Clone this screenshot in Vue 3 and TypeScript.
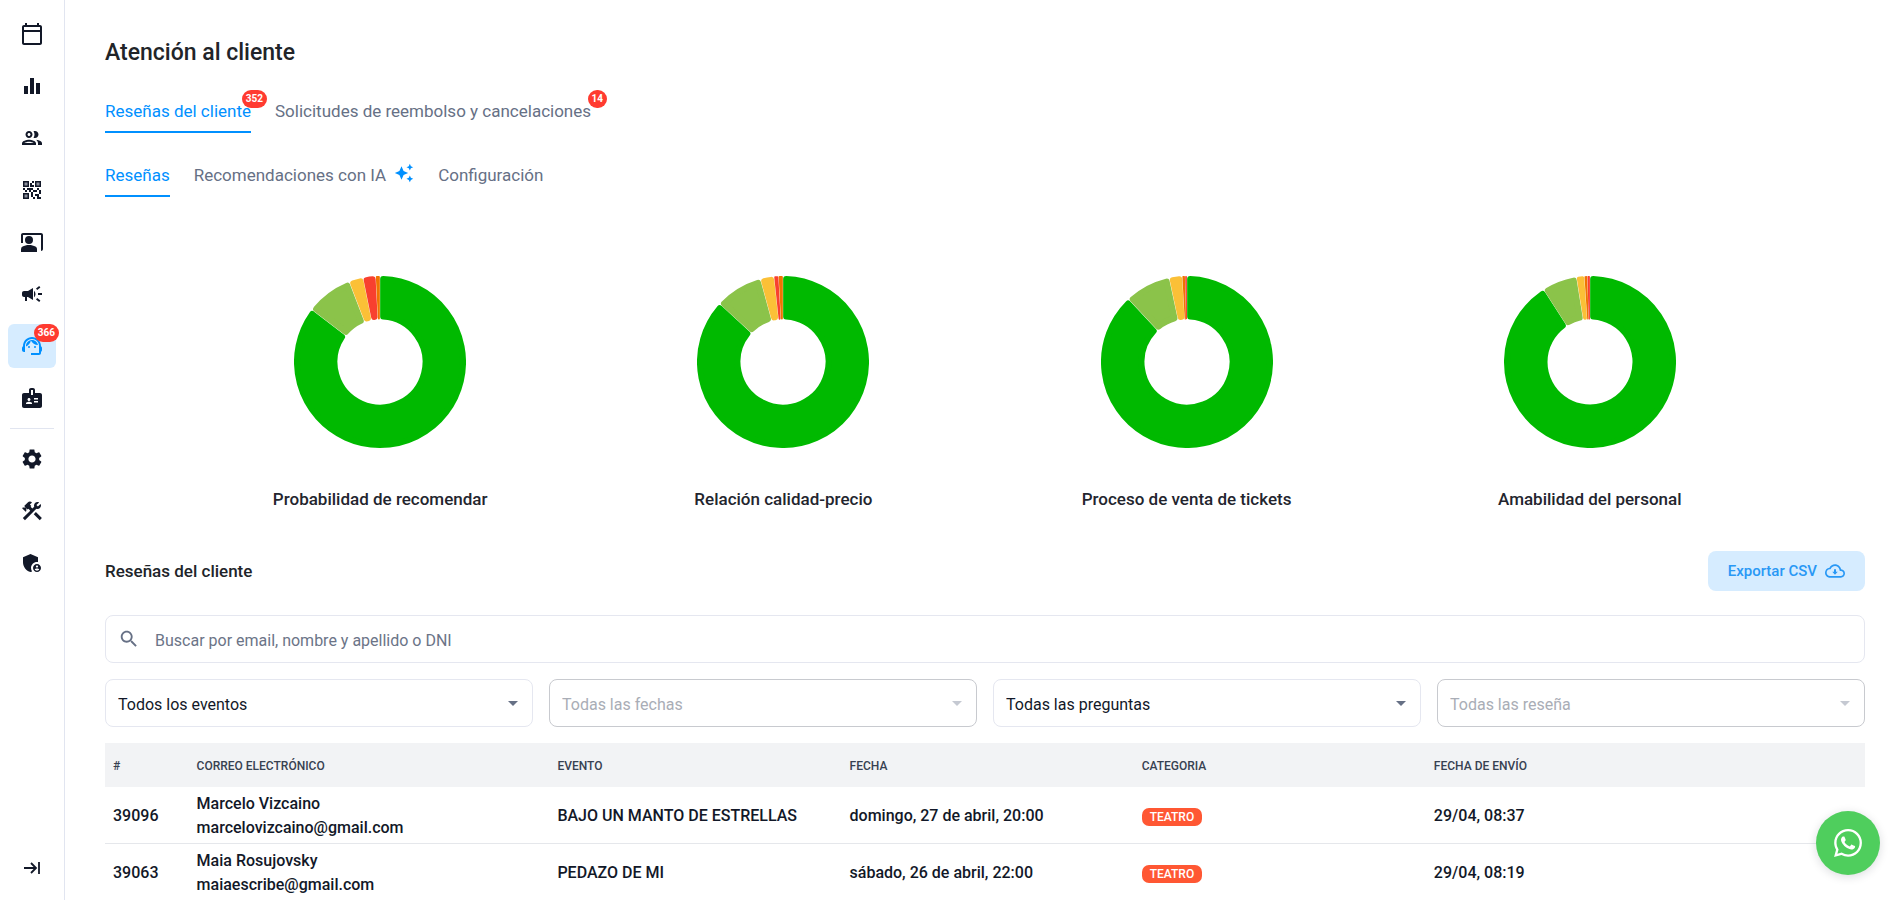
<script setup lang="ts">
import { ref } from 'vue'

interface Shape {
  d: string
  fill?: string
}
interface NavItem {
  label: string
  shapes: Shape[]
  active?: boolean
  badge?: number
}
interface Slice {
  color: string
  degrees: number
}
interface Chart {
  title: string
  slices: Slice[]
}

const DARK_GREEN = '#00b900'
const LIGHT_GREEN = '#8bc34a'
const YELLOW = '#fbc037'
const ORANGE = '#ef7400'
const RED = '#f8402f'

const mainNav: NavItem[] = [
  {
    label: 'Eventos',
    shapes: [{ d: 'M20 3h-1V1h-2v2H7V1H5v2H4c-1.1 0-2 .9-2 2v16c0 1.1.9 2 2 2h16c1.1 0 2-.9 2-2V5c0-1.1-.9-2-2-2zm0 18H4V10h16v11zm0-13H4V5h16v3z' }],
  },
  { label: 'Reportes', shapes: [{ d: 'M10 20h4V4h-4v16zm-6 0h4v-8H4v8zM16 9v11h4V9h-4z' }] },
  {
    label: 'Clientes',
    shapes: [{ d: 'M9 13.75c-2.34 0-7 1.17-7 3.5V19h14v-1.75c0-2.33-4.66-3.5-7-3.5zM4.34 17c.84-.58 2.87-1.25 4.66-1.25s3.82.67 4.66 1.25H4.34zM9 12c1.93 0 3.5-1.57 3.5-3.5S10.93 5 9 5 5.5 6.57 5.5 8.5 7.07 12 9 12zm0-5c.83 0 1.5.67 1.5 1.5S9.83 10 9 10s-1.5-.67-1.5-1.5S8.17 7 9 7zm7.04 6.81c1.16.84 1.96 1.96 1.96 3.44V19h4v-1.75c0-2.02-3.5-3.17-5.96-3.44zM15 12c1.93 0 3.5-1.57 3.5-3.5S16.93 5 15 5c-.54 0-1.04.13-1.5.35.63.89 1 1.98 1 3.15s-.37 2.26-1 3.15c.46.22.96.35 1.5.35z' }],
  },
  {
    label: 'Accesos QR',
    shapes: [
      { d: 'M4 4h4v4H4zM16 4h4v4h-4zM4 16h4v4H4z', fill: '#8b8f9b' },
      { d: 'M15 21h-2v-2h2v2zm-2-7h-2v5h2v-5zm8-2h-2v4h2v-4zm-2-2h-2v2h2v-2zM7 12H5v2h2v-2zm-2-2H3v2h2v-2zm7-5h2V3h-2v2zm-7.5-.5v3h3v-3h-3zM9 9H3V3h6v6zm-4.5 7.5v3h3v-3h-3zM9 21H3v-6h6v6zm7.5-16.5v3h3v-3h-3zM21 9h-6V3h6v6zm-2 10v-3h-4v2h2v3h4v-2h-2zm-2-7h-4v2h4v-2zm-4-2H7v2h2v2h2v-2h2v-2zm1-1V7h-2V5h-2v4h4z' },
    ],
  },
  {
    label: 'Presentadores',
    shapes: [
      { d: 'M21 3H3c-1.1 0-2 .9-2 2v8h2V5h18v16c1.1 0 2-.9 2-2V5c0-1.1-.9-2-2-2z' },
      { d: 'M9 6a4 4 0 1 0 0 8 4 4 0 0 0 0-8zM15.39 16.56C13.71 15.7 11.53 15 9 15s-4.71.7-6.39 1.56A2.97 2.97 0 0 0 1 19.22V22h16v-2.78c0-1.12-.61-2.15-1.61-2.66z' },
    ],
  },
  {
    label: 'Marketing',
    shapes: [{ d: 'M18 11v2h4v-2h-4zm-2 6.61c.96.71 2.21 1.65 3.2 2.39.4-.53.8-1.07 1.2-1.6-.99-.74-2.24-1.68-3.2-2.4-.4.54-.8 1.08-1.2 1.61zM20.4 5.6c-.4-.53-.8-1.07-1.2-1.6-.99.74-2.24 1.68-3.2 2.4.4.53.8 1.07 1.2 1.6.96-.72 2.21-1.65 3.2-2.4zM4 9c-1.1 0-2 .9-2 2v2c0 1.1.9 2 2 2h1v4h2v-4h1l5 3V6L8 9H4zm11.5 3c0-1.33-.58-2.53-1.5-3.35v6.69c.92-.81 1.5-2.01 1.5-3.34z' }],
  },
  {
    label: 'Atención al cliente',
    active: true,
    badge: 366,
    shapes: [
      { d: 'M21 12.22C21 6.73 16.74 3 12 3c-4.69 0-9 3.65-9 9.28-.6.34-1 .98-1 1.72v2c0 1.1.9 2 2 2h1v-6.1c0-3.87 3.13-7 7-7s7 3.13 7 7V19h-8v2h8c1.1 0 2-.9 2-2v-1.22c.59-.31 1-.92 1-1.64v-2.3c0-.7-.41-1.31-1-1.62z' },
      { d: 'M9 12a1 1 0 1 0 0 2 1 1 0 0 0 0-2zM15 12a1 1 0 1 0 0 2 1 1 0 0 0 0-2z' },
      { d: 'M18 11.03C17.52 8.18 15.04 6 12.05 6c-3.03 0-6.29 2.51-6.03 6.45 2.47-1.01 4.33-3.21 4.86-5.89 1.31 2.63 4 4.44 7.12 4.47z' },
    ],
  },
  {
    label: 'Personal',
    shapes: [{ d: 'M20 7h-5V4c0-1.1-.9-2-2-2h-2c-1.1 0-2 .9-2 2v3H4c-1.1 0-2 .9-2 2v11c0 1.1.9 2 2 2h16c1.1 0 2-.9 2-2V9c0-1.1-.9-2-2-2zM9 12c.83 0 1.5.67 1.5 1.5S9.83 15 9 15s-1.5-.67-1.5-1.5S8.17 12 9 12zm3 6H6v-.75c0-1 2-1.5 3-1.5s3 .5 3 1.5V18zm1-9h-2V4h2v5zm5 7.5h-4V15h4v1.5zm0-3h-4V12h4v1.5z' }],
  },
]

const adminNav: NavItem[] = [
  {
    label: 'Ajustes',
    shapes: [{ d: 'M19.14 12.94c.04-.3.06-.61.06-.94 0-.32-.02-.64-.07-.94l2.03-1.58c.18-.14.23-.41.12-.61l-1.92-3.32c-.12-.22-.37-.29-.59-.22l-2.39.96c-.5-.38-1.03-.7-1.62-.94l-.36-2.54c-.04-.24-.24-.41-.48-.41h-3.84c-.24 0-.43.17-.47.41l-.36 2.54c-.59.24-1.13.57-1.62.94l-2.39-.96c-.22-.08-.47 0-.59.22L2.74 8.87c-.12.21-.08.47.12.61l2.03 1.58c-.05.3-.09.63-.09.94s.02.64.07.94l-2.03 1.58c-.18.14-.23.41-.12.61l1.92 3.32c.12.22.37.29.59.22l2.39-.96c.5.38 1.03.7 1.62.94l.36 2.54c.05.24.24.41.48.41h3.84c.24 0 .44-.17.47-.41l.36-2.54c.59-.24 1.13-.56 1.62-.94l2.39.96c.22.08.47 0 .59-.22l1.92-3.32c.12-.22.07-.47-.12-.61l-2.01-1.58zM12 15.6c-1.98 0-3.6-1.62-3.6-3.6s1.62-3.6 3.6-3.6 3.6 1.62 3.6 3.6-1.62 3.6-3.6 3.6z' }],
  },
  {
    label: 'Herramientas',
    shapes: [
      { d: 'm13.78 15.17 2.12-2.12 6 6-2.12 2.12z' },
      { d: 'M17.5 10c1.93 0 3.5-1.57 3.5-3.5 0-.58-.16-1.12-.41-1.6l-2.7 2.7-1.49-1.49 2.7-2.7c-.48-.25-1.02-.41-1.6-.41C15.57 3 14 4.57 14 6.5c0 .41.08.8.21 1.16l-1.85 1.85-1.78-1.78.71-.71-1.41-1.41L12 3.49c-1.17-1.17-3.07-1.17-4.24 0L4.22 7.03l1.41 1.41H2.81l-.71.71 3.54 3.54.71-.71V9.15l1.41 1.41.71-.71 1.78 1.78-7.41 7.41 2.12 2.12L16.34 9.79c.36.13.75.21 1.16.21z' },
    ],
  },
  {
    label: 'Administración',
    shapes: [
      { d: 'M17 11c.34 0 .67.04 1 .09V6.27L10.5 3 3 6.27v4.91c0 4.54 3.2 8.79 7.5 9.82.55-.13 1.08-.32 1.6-.55-.69-.98-1.1-2.17-1.1-3.45 0-3.31 2.69-6 6-6z' },
      { d: 'M17 13c-2.21 0-4 1.79-4 4s1.79 4 4 4 4-1.79 4-4-1.79-4-4-4zm0 1.38c.62 0 1.12.51 1.12 1.12s-.51 1.12-1.12 1.12-1.12-.51-1.12-1.12.5-1.12 1.12-1.12zm0 5.37c-.93 0-1.74-.46-2.24-1.17.05-.72 1.51-1.08 2.24-1.08s2.19.36 2.24 1.08c-.5.71-1.31 1.17-2.24 1.17z' },
    ],
  },
]

const charts: Chart[] = [
  {
    title: 'Probabilidad de recomendar',
    slices: [
      { color: DARK_GREEN, degrees: 307.5 },
      { color: LIGHT_GREEN, degrees: 31.5 },
      { color: YELLOW, degrees: 9.6 },
      { color: RED, degrees: 8.5 },
      { color: ORANGE, degrees: 2.9 },
    ],
  },
  {
    title: 'Relación calidad-precio',
    slices: [
      { color: DARK_GREEN, degrees: 312.5 },
      { color: LIGHT_GREEN, degrees: 32.2 },
      { color: YELLOW, degrees: 9.3 },
      { color: RED, degrees: 3 },
      { color: ORANGE, degrees: 3 },
    ],
  },
  {
    title: 'Proceso de venta de tickets',
    slices: [
      { color: DARK_GREEN, degrees: 317 },
      { color: LIGHT_GREEN, degrees: 31 },
      { color: YELLOW, degrees: 8.8 },
      { color: ORANGE, degrees: 1.9 },
      { color: RED, degrees: 1.3 },
    ],
  },
  {
    title: 'Amabilidad del personal',
    slices: [
      { color: DARK_GREEN, degrees: 327.3 },
      { color: LIGHT_GREEN, degrees: 23.6 },
      { color: YELLOW, degrees: 5.3 },
      { color: ORANGE, degrees: 2 },
      { color: RED, degrees: 1.8 },
    ],
  },
]

const OUTER = 85
const INNER = 42

/* Ring segments, inset by the corner radius and stroked back out with round joins. */
function arcs(slices: Slice[]) {
  const rad = Math.PI / 180
  let start = 0
  return slices.map(({ color, degrees }) => {
    const from = start * rad
    const to = (start + degrees) * rad
    start += degrees
    const half = Math.min((to - from) / 2, Math.PI / 2)
    const corner = Math.min(3, INNER * Math.sin(half) * 0.9)
    const inset = corner + 0.15
    const ro = OUTER - corner
    const ri = INNER + corner
    const ao = Math.min(Math.asin(inset / ro), half)
    const ai = Math.min(Math.asin(inset / ri), half)
    const at = (r: number, a: number) => `${(r * Math.sin(a)).toFixed(2)} ${(-r * Math.cos(a)).toFixed(2)}`
    const large = degrees > 180 ? 1 : 0
    const d =
      `M${at(ro, from + ao)}A${ro} ${ro} 0 ${large} 1 ${at(ro, to - ao)}` +
      `L${at(ri, to - ai)}A${ri} ${ri} 0 ${large} 0 ${at(ri, from + ai)}Z`
    return { color, d, width: corner * 2 }
  })
}

const filters = [
  { id: 'evento', label: 'Evento', value: 'Todos los eventos', disabled: false },
  { id: 'fecha', label: 'Fecha', value: 'Todas las fechas', disabled: true },
  { id: 'pregunta', label: 'Pregunta', value: 'Todas las preguntas', disabled: false },
  { id: 'resena', label: 'Reseña', value: 'Todas las reseña', disabled: true },
]

const reviews = [
  { id: 39096, name: 'Marcelo Vizcaino', email: 'marcelovizcaino@gmail.com', event: 'BAJO UN MANTO DE ESTRELLAS', date: 'domingo, 27 de abril, 20:00', category: 'TEATRO', sent: '29/04, 08:37' },
  { id: 39063, name: 'Maia Rosujovsky', email: 'maiaescribe@gmail.com', event: 'PEDAZO DE MI', date: 'sábado, 26 de abril, 22:00', category: 'TEATRO', sent: '29/04, 08:19' },
]

const query = ref('')
</script>

<template>
  <div class="shell">
    <nav class="sidebar" aria-label="Principal">
      <a
        v-for="item in mainNav"
        :key="item.label"
        href="#"
        class="nav-item"
        :class="{ active: item.active }"
        :aria-label="item.label"
      >
        <svg class="icon" viewBox="0 0 24 24" aria-hidden="true">
          <path v-for="(s, i) in item.shapes" :key="i" :d="s.d" :fill="s.fill ?? 'currentColor'" />
        </svg>
        <span v-if="item.badge" class="badge nav-badge">{{ item.badge }}</span>
      </a>
      <hr class="nav-rule" />
      <a v-for="item in adminNav" :key="item.label" href="#" class="nav-item" :aria-label="item.label">
        <svg class="icon" viewBox="0 0 24 24" aria-hidden="true">
          <path v-for="(s, i) in item.shapes" :key="i" :d="s.d" fill="currentColor" />
        </svg>
      </a>
      <button type="button" class="nav-item expand" aria-label="Expandir menú">
        <svg class="icon" viewBox="0 0 24 24" aria-hidden="true">
          <path d="M4 12h12M11 7l5 5-5 5M19 6v12" fill="none" stroke="currentColor" stroke-width="1.8" />
        </svg>
      </button>
    </nav>

    <main class="content">
      <h1 class="title">Atención al cliente</h1>

      <nav class="tabs" aria-label="Secciones">
        <a href="#" class="tab active">Reseñas del cliente<span class="badge tab-badge">352</span></a>
        <a href="#" class="tab">Solicitudes de reembolso y cancelaciones<span class="badge tab-badge">14</span></a>
      </nav>

      <nav class="tabs secondary" aria-label="Reseñas">
        <a href="#" class="tab active">Reseñas</a>
        <a href="#" class="tab with-icon">
          Recomendaciones con IA
          <svg class="sparkle" viewBox="0 0 24 24" aria-hidden="true">
            <path fill="currentColor" d="m19 9 1.25-2.75L23 5l-2.75-1.25L19 1l-1.25 2.75L15 5l2.75 1.25L19 9zm-7.5.5L9 4 6.5 9.5 1 12l5.5 2.5L9 20l2.5-5.5L17 12l-5.5-2.5zM19 15l-1.25 2.75L15 19l2.75 1.25L19 23l1.25-2.75L23 19l-2.75-1.25L19 15z" />
          </svg>
        </a>
        <a href="#" class="tab">Configuración</a>
      </nav>

      <section class="charts" aria-label="Resultados">
        <figure v-for="chart in charts" :key="chart.title" class="chart">
          <svg class="donut" viewBox="-85 -85 170 170" role="img" :aria-label="chart.title">
            <path
              v-for="(arc, i) in arcs(chart.slices)"
              :key="i"
              :d="arc.d"
              :fill="arc.color"
              :stroke="arc.color"
              :stroke-width="arc.width"
              stroke-linejoin="round"
            />
          </svg>
          <figcaption class="caption">{{ chart.title }}</figcaption>
        </figure>
      </section>

      <header class="section-head">
        <h2 class="subtitle">Reseñas del cliente</h2>
        <button type="button" class="export">
          Exportar CSV
          <svg class="cloud" viewBox="0 0 24 24" aria-hidden="true">
            <path fill="currentColor" d="M19.35 10.04C18.67 6.59 15.64 4 12 4 9.11 4 6.6 5.64 5.35 8.04 2.34 8.36 0 10.91 0 14c0 3.31 2.69 6 6 6h13c2.76 0 5-2.24 5-5 0-2.64-2.05-4.78-4.65-4.96zM19 18H6c-2.21 0-4-1.79-4-4 0-2.05 1.53-3.76 3.56-3.97l1.07-.11.5-.95C8.08 7.14 9.94 6 12 6c2.62 0 4.88 1.86 5.39 4.43l.3 1.5 1.53.11c1.56.1 2.78 1.41 2.78 2.96 0 1.65-1.35 3-3 3zM13.2 10h-2.4v3H8.7l3.3 3.4 3.3-3.4h-2.1z" />
          </svg>
        </button>
      </header>

      <label class="search">
        <svg class="search-icon" viewBox="0 0 24 24" aria-hidden="true">
          <path fill="currentColor" d="M15.5 14h-.79l-.28-.27C15.41 12.59 16 11.11 16 9.5 16 5.91 13.09 3 9.5 3S3 5.91 3 9.5 5.91 16 9.5 16c1.61 0 3.09-.59 4.23-1.57l.27.28v.79l5 4.99L20.49 19l-4.99-5zm-6 0C7.01 14 5 11.99 5 9.5S7.01 5 9.5 5 14 7.01 14 9.5 11.99 14 9.5 14z" />
        </svg>
        <input
          v-model="query"
          type="text"
          class="search-input"
          aria-label="Buscar"
          placeholder="Buscar por email, nombre y apellido o DNI"
        />
      </label>

      <div class="filters">
        <div v-for="f in filters" :key="f.id" class="filter" :class="{ disabled: f.disabled }">
          <select :id="f.id" class="select" :aria-label="f.label" :disabled="f.disabled">
            <option>{{ f.value }}</option>
          </select>
          <svg class="caret" viewBox="0 0 24 24" aria-hidden="true">
            <path fill="currentColor" d="m7 10 5 5 5-5z" />
          </svg>
        </div>
      </div>

      <table class="table">
        <colgroup>
          <col class="col-id" />
          <col class="col-mail" />
          <col class="col-data" />
          <col class="col-data" />
          <col class="col-data" />
          <col />
        </colgroup>
        <thead>
          <tr>
            <th scope="col">#</th>
            <th scope="col">CORREO ELECTRÓNICO</th>
            <th scope="col">EVENTO</th>
            <th scope="col">FECHA</th>
            <th scope="col">CATEGORIA</th>
            <th scope="col">FECHA DE ENVÍO</th>
          </tr>
        </thead>
        <tbody>
          <tr v-for="r in reviews" :key="r.id">
            <td>{{ r.id }}</td>
            <td>{{ r.name }}<br />{{ r.email }}</td>
            <td>{{ r.event }}</td>
            <td>{{ r.date }}</td>
            <td><span class="pill">{{ r.category }}</span></td>
            <td>{{ r.sent }}</td>
          </tr>
        </tbody>
      </table>
    </main>

    <a href="#" class="whatsapp" aria-label="WhatsApp">
      <svg class="whatsapp-icon" viewBox="0 0 24 24" aria-hidden="true">
        <path fill="currentColor" d="M17.472 14.382c-.297-.149-1.758-.867-2.03-.967-.273-.099-.471-.148-.67.15-.197.297-.767.966-.94 1.164-.173.199-.347.223-.644.075-.297-.15-1.255-.463-2.39-1.475-.883-.788-1.48-1.761-1.653-2.059-.173-.297-.018-.458.13-.606.134-.133.298-.347.446-.52.149-.174.198-.298.298-.497.099-.198.05-.371-.025-.52-.075-.149-.669-1.612-.916-2.207-.242-.579-.487-.5-.669-.51-.173-.008-.371-.01-.57-.01-.198 0-.52.074-.792.372-.272.297-1.04 1.016-1.04 2.479 0 1.462 1.065 2.875 1.213 3.074.149.198 2.096 3.2 5.077 4.487.709.306 1.262.489 1.694.625.712.227 1.36.195 1.871.118.571-.085 1.758-.719 2.006-1.413.248-.694.248-1.289.173-1.413-.074-.124-.272-.198-.57-.347m-5.421 7.403h-.004a9.87 9.87 0 01-5.031-1.378l-.361-.214-3.741.982.998-3.648-.235-.374a9.86 9.86 0 01-1.51-5.26c.001-5.45 4.436-9.884 9.888-9.884 2.64 0 5.122 1.03 6.988 2.898a9.825 9.825 0 012.893 6.994c-.003 5.45-4.437 9.884-9.885 9.884m8.413-18.297A11.815 11.815 0 0012.05 0C5.495 0 .16 5.335.157 11.892c0 2.096.547 4.142 1.588 5.945L.057 24l6.305-1.654a11.882 11.882 0 005.683 1.448h.005c6.554 0 11.89-5.335 11.893-11.893a11.821 11.821 0 00-3.48-8.413z" />
      </svg>
    </a>
  </div>
</template>

<style>
body {
  margin: 0;
  background: #fff;
}
</style>

<style scoped>
.shell {
  display: flex;
  height: 100vh;
  font-family: Roboto, "Liberation Sans", sans-serif;
  font-size: 16px;
  line-height: 24px;
  color: #121828;
}

.sidebar {
  display: flex;
  flex: none;
  flex-direction: column;
  gap: 8px;
  width: 65px;
  box-sizing: border-box;
  padding: 12px 0 10px;
  border-right: 1px solid #e1e5f0;
}
.nav-item {
  position: relative;
  display: flex;
  flex: none;
  align-items: center;
  justify-content: center;
  height: 44px;
  margin: 0 8px;
  padding: 0;
  border: 0;
  border-radius: 6px;
  background: none;
  color: #121828;
  cursor: pointer;
}
.nav-item.active {
  background: #d6ecff;
  color: #0090ff;
}
.icon {
  width: 24px;
  height: 24px;
}
.nav-rule {
  flex: none;
  width: 44px;
  height: 1px;
  margin: 0 auto;
  border: 0;
  background: #e1e5f0;
}
.expand {
  margin-top: auto;
}

.badge {
  position: absolute;
  top: 0;
  min-width: 18px;
  height: 18px;
  box-sizing: border-box;
  padding: 0 4px;
  border-radius: 9px;
  background: #ff3b30;
  color: #fff;
  font-size: 10px;
  font-weight: 700;
  line-height: 18px;
  text-align: center;
}
.nav-badge {
  right: -3px;
}
.tab-badge {
  top: -9px;
  right: -16px;
}

.content {
  flex: 1;
  min-width: 0;
  overflow-y: auto;
  scrollbar-width: none;
  padding: 39px 38px 0 40px;
}
.title {
  margin: 0;
  font-size: 23px;
  font-weight: 500;
  line-height: 28px;
  color: #212429;
}
.tabs {
  display: flex;
  gap: 24px;
  margin-top: 32px;
}
.tabs.secondary {
  margin-top: 30px;
}
.tab {
  position: relative;
  padding-bottom: 8px;
  border-bottom: 2px solid transparent;
  color: #667085;
  font-size: 17px;
  text-decoration: none;
  white-space: nowrap;
}
.tab.active {
  border-color: #0090ff;
  color: #0090ff;
}
.with-icon {
  display: flex;
  gap: 8px;
}
.sparkle {
  width: 20px;
  height: 20px;
  color: #0090ff;
}

.charts {
  display: flex;
  justify-content: space-evenly;
  margin-top: 79px;
}
.chart {
  display: flex;
  flex-direction: column;
  align-items: center;
  gap: 39px;
  width: 256px;
  margin: 0;
}
.donut {
  display: block;
  width: 172px;
  height: 172px;
}
.caption {
  font-size: 17px;
  font-weight: 500;
  color: #23252e;
  white-space: nowrap;
}

.section-head {
  display: flex;
  align-items: center;
  justify-content: space-between;
  margin-top: 40px;
}
.subtitle {
  margin: 0;
  font-size: 17px;
  font-weight: 500;
  color: #212429;
}
.export {
  display: flex;
  align-items: center;
  gap: 8px;
  height: 40px;
  padding: 0 20px;
  border: 0;
  border-radius: 8px;
  background: #d6ecff;
  color: #2998f5;
  font: 500 15px Roboto, "Liberation Sans", sans-serif;
  cursor: pointer;
}
.cloud {
  width: 20px;
  height: 20px;
}

.search {
  display: flex;
  align-items: center;
  gap: 15px;
  height: 48px;
  box-sizing: border-box;
  margin-top: 24px;
  padding: 0 12px;
  border: 1px solid #e5e7f0;
  border-radius: 8px;
}
.search-icon {
  flex: none;
  width: 22px;
  height: 22px;
  color: #667085;
}
.search-input {
  flex: 1;
  min-width: 0;
  padding: 2px 0 0;
  border: 0;
  outline: 0;
  background: none;
  color: #121828;
  font: 16px Roboto, "Liberation Sans", sans-serif;
}
.search-input::placeholder {
  color: #6b7487;
  opacity: 1;
}

.filters {
  display: grid;
  grid-template-columns: repeat(4, 1fr);
  gap: 16px;
  margin-top: 16px;
}
.filter {
  position: relative;
}
.select {
  display: block;
  width: 100%;
  height: 48px;
  padding: 2px 36px 0 12px;
  border: 1px solid #e5e7f0;
  border-radius: 8px;
  appearance: none;
  background: #fff;
  color: #121828;
  font: 16px Roboto, "Liberation Sans", sans-serif;
}
.caret {
  position: absolute;
  top: 12px;
  right: 8px;
  width: 24px;
  height: 24px;
  color: #667085;
  pointer-events: none;
}
.disabled .select {
  border-color: #c8cacf;
  color: #a9adb6;
  opacity: 1;
}
.disabled .caret {
  color: #c5c9d2;
}

.table {
  width: 100%;
  margin-top: 16px;
  border-collapse: separate;
  border-spacing: 0;
  table-layout: fixed;
}
.col-id {
  width: 4.75%;
}
.col-mail {
  width: 20.5%;
}
.col-data {
  width: 16.6%;
}
.table th {
  height: 42px;
  padding: 2px 8px 0;
  background: #f2f3f5;
  color: #374151;
  font-size: 12px;
  font-weight: 500;
  text-align: left;
}
.table td {
  padding: 5px 8px 3px;
  border-bottom: 1px solid #e5e7eb;
  font-weight: 500;
  white-space: nowrap;
}
.pill {
  display: inline-block;
  padding: 0 8px;
  border-radius: 7px;
  background: #ff5733;
  color: #fff;
  font-size: 12px;
  font-weight: 500;
  line-height: 18px;
  vertical-align: middle;
}

.whatsapp {
  position: fixed;
  right: 23px;
  bottom: 25px;
  display: flex;
  align-items: center;
  justify-content: center;
  width: 64px;
  height: 64px;
  border-radius: 50%;
  background: #4fce5d;
  color: #fff;
  box-shadow: 0 2px 10px rgba(18, 24, 40, 0.15);
}
.whatsapp-icon {
  width: 28px;
  height: 28px;
}
</style>
